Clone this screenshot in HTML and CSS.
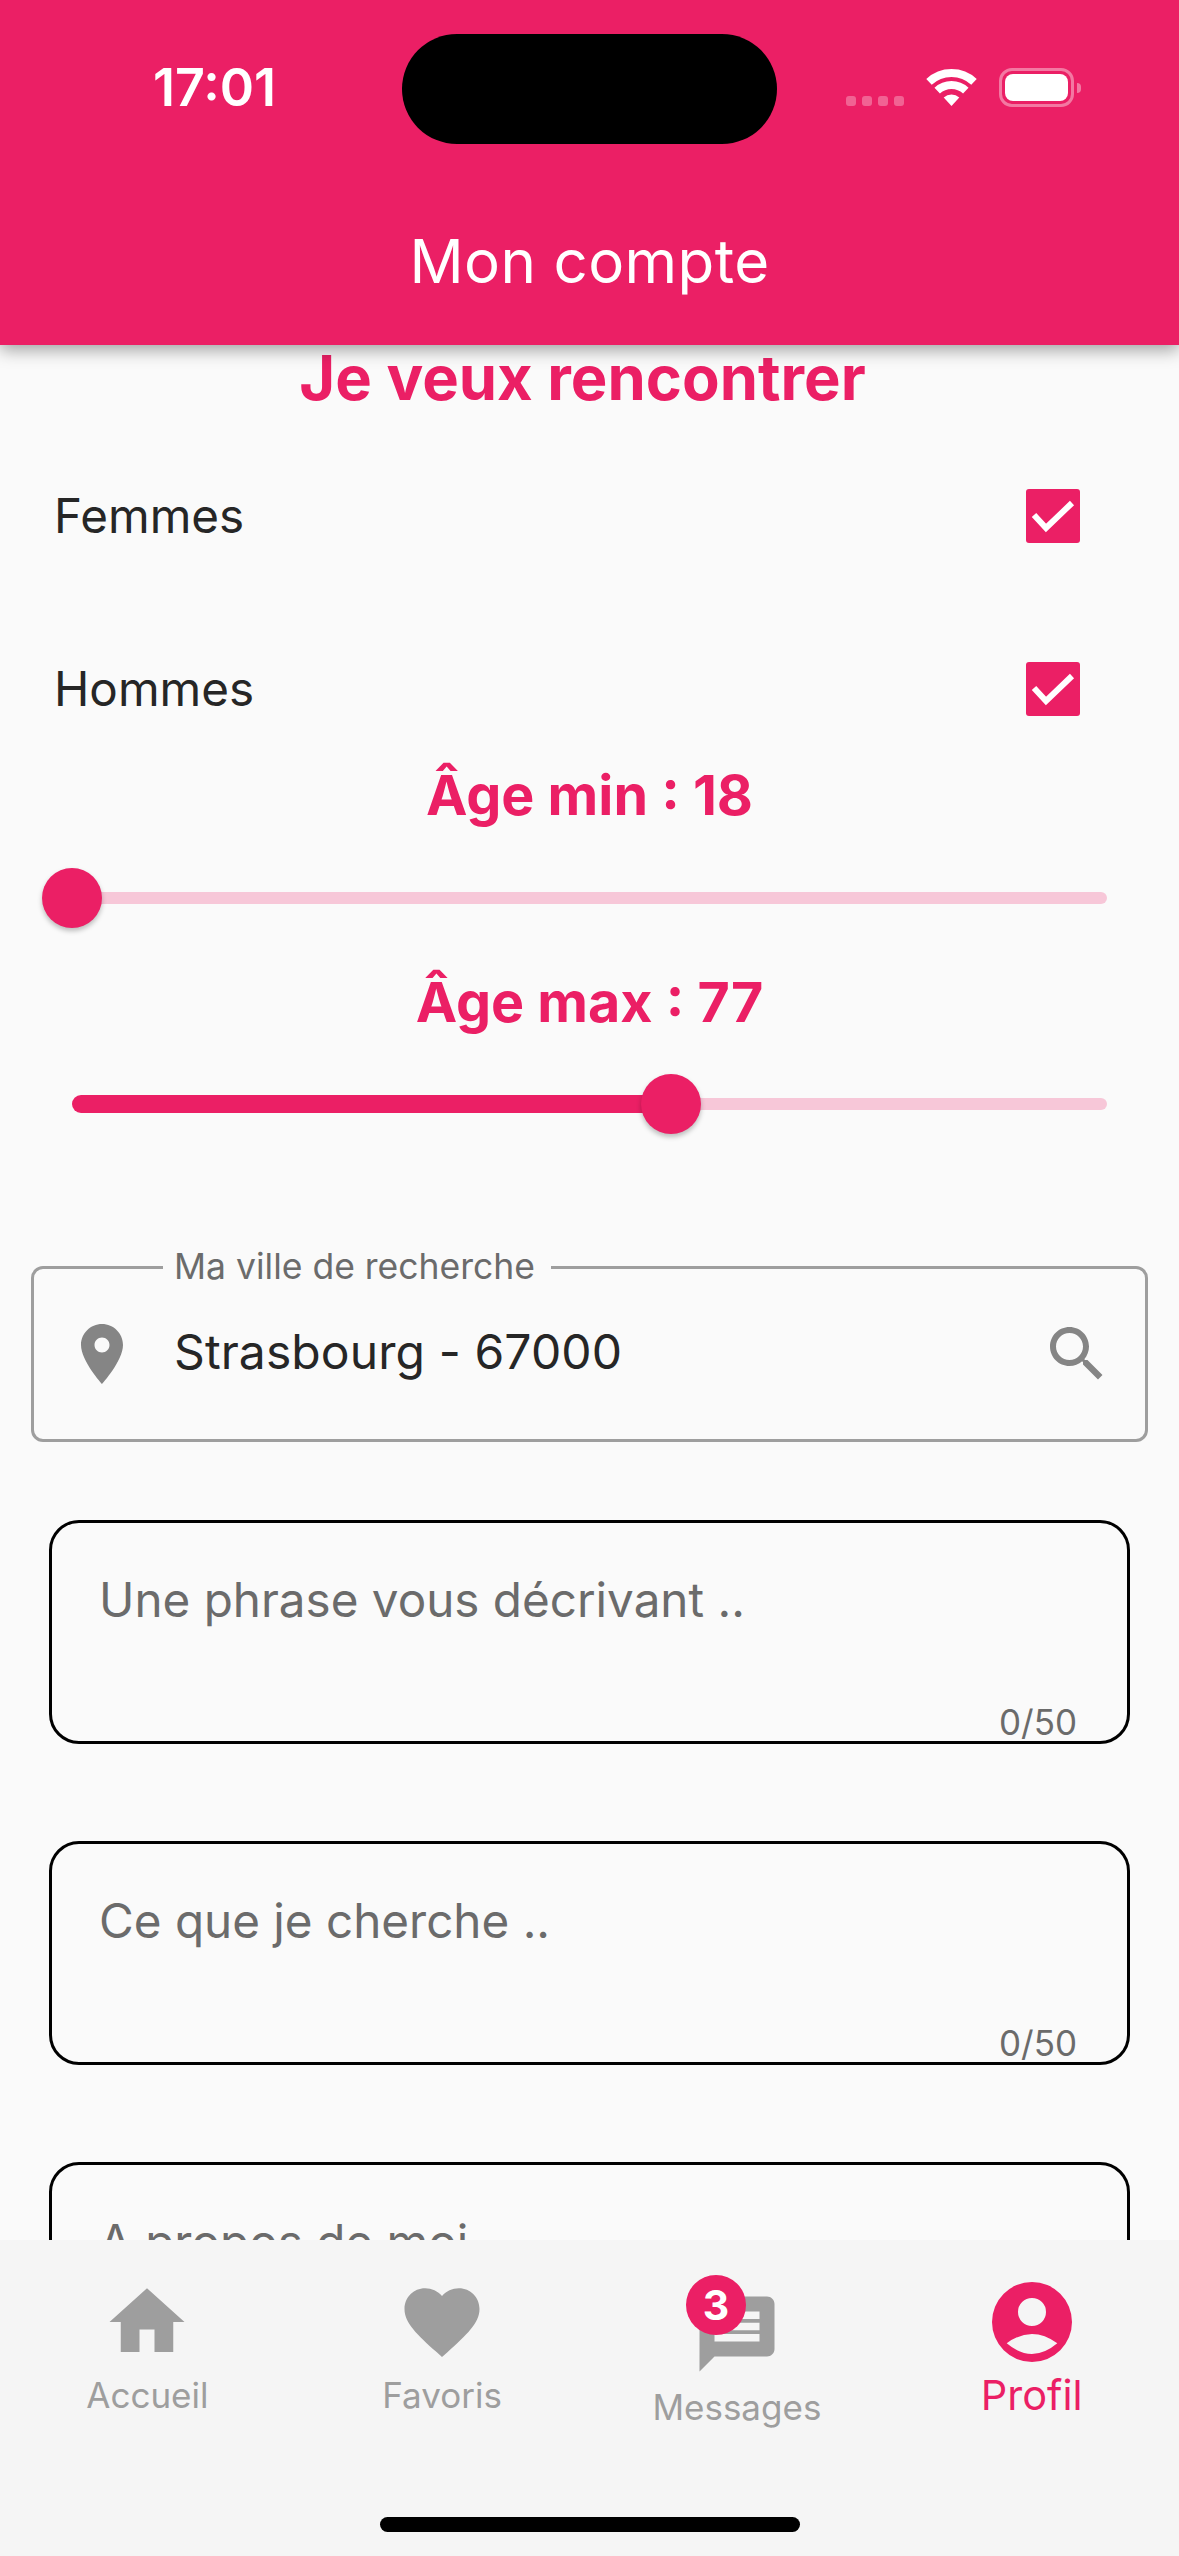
FILE: index.html
```html
<!DOCTYPE html>
<html lang="fr">
<head>
    <meta charset="UTF-8">
    <meta name="viewport" content="width=device-width, initial-scale=1.0">
    <title>Mon compte</title>
    <link rel="stylesheet" href="styles.css">
</head>
<body>
    <div class="page">
        <header class="appbar">
            <div class="statusbar">
                <span class="time">17:01</span>
                <div class="island"></div>
                <div class="status-icons">
                    <div class="signal"><i></i><i></i><i></i><i></i></div>
                    <svg class="wifi" width="51" height="37" viewBox="0 0 51 37">
                        <path d="M3 12.9A33 33 0 0 1 48 12.9" fill="none" stroke="#fff" stroke-width="8"/>
                        <path d="M11.2 21.6A21 21 0 0 1 39.8 21.6" fill="none" stroke="#fff" stroke-width="8"/>
                        <path d="M25.5 37L17.7 28.6A11.5 11.5 0 0 1 33.3 28.6Z" fill="#fff"/>
                    </svg>
                    <div class="battery"><div class="battery-level"></div></div>
                    <div class="battery-nub"></div>
                </div>
            </div>
            <h1>Mon compte</h1>
        </header>

        <main class="content">
            <h2 class="section-title">Je veux rencontrer</h2>
            <div class="checklist">
                <div class="check-row">
                    <span>Femmes</span>
                    <div class="checkbox">
                        <svg width="54" height="54" viewBox="0 0 54 54"><path d="M8 26L20 39L46 14" fill="none" stroke="#fff" stroke-width="6"/></svg>
                    </div>
                </div>
                <div class="check-row">
                    <span>Hommes</span>
                    <div class="checkbox">
                        <svg width="54" height="54" viewBox="0 0 54 54"><path d="M8 26L20 39L46 14" fill="none" stroke="#fff" stroke-width="6"/></svg>
                    </div>
                </div>
            </div>

            <h3 class="age-title">Âge min : 18</h3>
            <div class="slider">
                <div class="track-active" style="width: 0%"></div>
                <div class="track-rest"></div>
                <div class="thumb" style="left: 0%"></div>
            </div>

            <h3 class="age-title">Âge max : 77</h3>
            <div class="slider">
                <div class="track-active" style="width: 57.9%"></div>
                <div class="track-rest"></div>
                <div class="thumb" style="left: 57.9%"></div>
            </div>

            <div class="city-field">
                <span class="city-label">Ma ville de recherche</span>
                <svg class="field-icon" width="72" height="72" viewBox="0 0 24 24"><path d="M12 2C8.13 2 5 5.13 5 9c0 5.25 7 13 7 13s7-7.75 7-13c0-3.87-3.13-7-7-7zm0 9.5c-1.38 0-2.5-1.12-2.5-2.5s1.12-2.5 2.5-2.5 2.5 1.12 2.5 2.5-1.12 2.5-2.5 2.5z"/></svg>
                <span class="city-value">Strasbourg - 67000</span>
                <svg class="field-icon" width="72" height="72" viewBox="0 0 24 24"><path d="M15.5 14h-.79l-.28-.27C15.41 12.59 16 11.11 16 9.5 16 5.91 13.09 3 9.5 3S3 5.91 3 9.5 5.91 16 9.5 16c1.61 0 3.09-.59 4.23-1.57l.27.28v.79l5 4.99L20.49 19l-4.99-5zm-6 0C7.01 14 5 11.99 5 9.5S7.01 5 9.5 5 14 7.01 14 9.5 11.99 14 9.5 14z"/></svg>
            </div>

            <div class="text-box">
                <span class="placeholder">Une phrase vous décrivant ..</span>
                <span class="counter">0/50</span>
            </div>
            <div class="text-box">
                <span class="placeholder">Ce que je cherche ..</span>
                <span class="counter">0/50</span>
            </div>
            <div class="text-box">
                <span class="placeholder">A propos de moi</span>
            </div>
        </main>

        <nav class="tabbar">
            <div class="tabs">
                <div class="tab tab-home">
                    <svg width="90" height="90" viewBox="0 0 24 24"><path d="M10 20v-6h4v6h5v-8h3L12 3 2 12h3v8z"/></svg>
                    <span>Accueil</span>
                </div>
                <div class="tab tab-home">
                    <svg width="90" height="90" viewBox="0 0 24 24"><path d="M12 21.35l-1.45-1.32C5.4 15.36 2 12.28 2 8.5 2 5.42 4.42 3 7.5 3c1.74 0 3.41.81 4.5 2.09C13.09 3.81 14.76 3 16.5 3 19.58 3 22 5.42 22 8.5c0 3.78-3.4 6.86-8.55 11.54L12 21.35z"/></svg>
                    <span>Favoris</span>
                </div>
                <div class="tab tab-messages">
                    <div class="tab-icon">
                        <svg width="90" height="90" viewBox="0 0 24 24"><path d="M20 2H4c-1.1 0-1.99.9-1.99 2L2 22l4-4h14c1.1 0 2-.9 2-2V4c0-1.1-.9-2-2-2zm-2 12H6v-2h12v2zm0-3H6V9h12v2zm0-3H6V6h12v2z"/></svg>
                        <span class="badge">3</span>
                    </div>
                    <span>Messages</span>
                </div>
                <div class="tab tab-profile">
                    <svg width="80" height="80" viewBox="0 0 80 80"><path fill-rule="evenodd" d="M40 0a40 40 0 1 0 0 80a40 40 0 1 0 0-80zM40 16a14 14 0 1 1 0 28a14 14 0 1 1 0-28zM14.700 61.300Q40 42.700 65.300 61.300Q40 82.700 14.700 61.300z"/></svg>
                    <span>Profil</span>
                </div>
            </div>
            <div class="home-bar"></div>
        </nav>
    </div>
</body>
</html>
```

FILE: styles.css
```css
body {
    margin: 0;
    background-color: #fafafa;
    font-family: Inter, "Noto Sans", sans-serif;
}
.page {
    width: 1179px;
    height: 2556px;
    display: flex;
    flex-direction: column;
    overflow: hidden;
}

/* top bar */
.appbar {
    position: relative;
    z-index: 2;
    height: 345px;
    flex-shrink: 0;
    box-sizing: border-box;
    padding-top: 68px;
    background: #eb1f65;
    color: #ffffff;
    box-shadow: 0 5px 16px rgba(0, 0, 0, 0.36);
}
.statusbar {
    display: flex;
    justify-content: space-between;
    align-items: center;
    height: 39px;
    padding: 0 98px 0 153px;
}
.time {
    font-size: 52px;
    font-weight: 600;
    line-height: 39px;
}
.island {
    position: absolute;
    top: 34px;
    left: 402px;
    width: 375px;
    height: 110px;
    border-radius: 55px;
    background: #000000;
}
.status-icons {
    display: flex;
    align-items: center;
}
.signal {
    display: flex;
    gap: 6px;
    align-self: flex-end;
    margin-right: 22px;
    margin-bottom: 1px;
}
.signal i {
    width: 10px;
    height: 10px;
    border-radius: 3px;
    background: rgba(255, 255, 255, 0.3);
}
.wifi {
    margin-right: 22px;
}
.battery {
    box-sizing: border-box;
    width: 75px;
    height: 39px;
    padding: 3px;
    border: 3px solid rgba(255, 255, 255, 0.4);
    border-radius: 13px;
}
.battery-level {
    height: 100%;
    border-radius: 8px;
    background: #ffffff;
}
.battery-nub {
    width: 4px;
    height: 10px;
    margin-left: 3px;
    border-radius: 0 5px 5px 0;
    background: rgba(255, 255, 255, 0.4);
}
.appbar h1 {
    margin: 118px 0 0;
    font-size: 60px;
    font-weight: 400;
    letter-spacing: 0.4px;
    line-height: 72px;
    text-align: center;
}

/* scrolling part, runs on under the tab bar */
.content {
    flex: 1;
    min-height: 0;
}
.section-title {
    margin: -4px 14px 0 0;
    color: #eb1f65;
    font-size: 61.5px;
    font-weight: 700;
    line-height: 74px;
    text-align: center;
}
.checklist {
    display: flex;
    flex-direction: column;
    gap: 53px;
    margin-top: 41px;
}
.check-row {
    display: flex;
    justify-content: space-between;
    align-items: center;
    height: 120px;
    padding: 0 99px 0 54px;
    color: #262626;
    font-size: 47.6px;
    line-height: 56px;
}
.checkbox {
    width: 54px;
    height: 54px;
    border-radius: 3px;
    background: #eb1f65;
}
.checkbox svg {
    display: block;
}
.age-title {
    margin: 11.5px 0 39px;
    color: #eb1f65;
    font-size: 55.6px;
    font-weight: 700;
    line-height: 68px;
    text-align: center;
}
.slider + .age-title {
    margin: 40.500px 0 37.500px;
}
.slider {
    position: relative;
    display: flex;
    align-items: center;
    height: 60px;
    margin: 0 72px;
}
.track-active {
    height: 18px;
    border-radius: 9px 0 0 9px;
    background: #eb1f65;
}
.track-rest {
    flex: 1;
    height: 12px;
    border-radius: 0 6px 6px 0;
    background: #f7c7d8;
}
.thumb {
    position: absolute;
    top: 0;
    width: 60px;
    height: 60px;
    margin-left: -30px;
    border-radius: 50%;
    background: #eb1f65;
    box-shadow: 0 3px 5px rgba(0, 0, 0, 0.25);
}

/* inputs */
.city-field {
    position: relative;
    display: flex;
    align-items: center;
    box-sizing: border-box;
    height: 176px;
    margin: 132.500px 31px 0;
    padding: 0 32px;
    border: 3px solid #9e9e9e;
    border-radius: 12px;
}
.city-label {
    position: absolute;
    top: -24px;
    left: 129px;
    padding: 0 16px 0 11px;
    background: #fafafa;
    color: #6b6b6b;
    font-size: 35.5px;
    line-height: 44px;
}
.field-icon {
    flex-shrink: 0;
    fill: #858585;
}
.city-value {
    flex: 1;
    margin-left: 36px;
    margin-bottom: 5px;
    color: #262626;
    font-size: 48px;
    letter-spacing: 0.1px;
    line-height: 58px;
}
.text-box {
    display: flex;
    flex-direction: column;
    justify-content: space-between;
    box-sizing: border-box;
    height: 224px;
    margin: 97px 49px 0;
    padding: 48px 50px 0 47px;
    border: 3px solid #000000;
    border-radius: 30px;
}
.city-field + .text-box {
    margin-top: 78px;
}
.placeholder {
    color: #6b6b6b;
    font-size: 47.6px;
    line-height: 58px;
}
.counter {
    align-self: flex-end;
    margin-bottom: -3px;
    color: #6b6b6b;
    font-size: 35px;
    line-height: 44px;
}

/* bottom tabs */
.tabbar {
    position: relative;
    z-index: 2;
    display: flex;
    flex-direction: column;
    align-items: center;
    height: 316px;
    flex-shrink: 0;
    background: #f5f5f5;
}
.tabs {
    display: grid;
    grid-template-columns: repeat(4, 1fr);
    width: 100%;
}
.tab {
    display: flex;
    flex-direction: column;
    align-items: center;
    color: #9e9e9e;
    font-size: 35px;
    line-height: 44px;
}
.tab svg {
    display: block;
    fill: #9e9e9e;
}
.tab > span {
    margin-top: 6px;
}
.tab-home {
    padding-top: 37px;
}
.tab-messages {
    padding-top: 49px;
}
.tab-profile {
    padding-top: 42px;
    color: #eb1f65;
    font-size: 41.5px;
    line-height: 50px;
}
.tab-profile svg {
    fill: #eb1f65;
}
.tab-profile > span {
    margin-top: 8px;
}
.tab-icon {
    position: relative;
}
.badge {
    position: absolute;
    top: -14px;
    left: -6px;
    width: 60px;
    height: 60px;
    border-radius: 50%;
    background: #eb1f65;
    color: #ffffff;
    font-size: 41px;
    font-weight: 700;
    line-height: 60px;
    text-align: center;
}
.home-bar {
    width: 420px;
    height: 15px;
    margin-top: auto;
    margin-bottom: 24px;
    border-radius: 8px;
    background: #000000;
}
```
